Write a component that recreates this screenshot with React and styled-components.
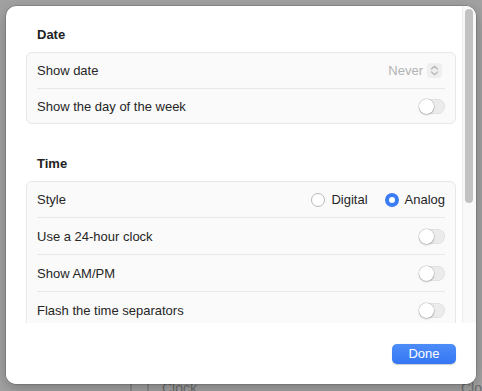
import React from 'react'
import styled, { createGlobalStyle } from 'styled-components'

const Global = createGlobalStyle`
  html, body { margin: 0; padding: 0; }
  *, *::before, *::after { box-sizing: border-box; }
  body {
    width: 482px;
    height: 391px;
    overflow: hidden;
    font-family: "Liberation Sans", Arial, sans-serif;
    -webkit-font-smoothing: antialiased;
  }
`

export default function App() {
  return (
    <>
      <Global />
      <Backdrop>
        <BackRow>
          <BackIcon />
          <BackLabel>Clock</BackLabel>
          <Spacer />
          <BackLabel>Clo</BackLabel>
        </BackRow>
        <Sheet>
          <Scroll>
            <Content>
              <Section>
                <Heading>Date</Heading>
                <Group>
                  <Row>
                    <Label>Show date</Label>
                    <Popup>
                      <PopupValue>Never</PopupValue>
                      <Stepper>
                        <svg width="9" height="11" viewBox="0 0 9 11">
                          <path d="M1.5 4 L4.5 1.2 L7.5 4" fill="none" stroke="#b9b9b9" strokeWidth="1.4" strokeLinecap="round" strokeLinejoin="round" />
                          <path d="M1.5 7 L4.5 9.8 L7.5 7" fill="none" stroke="#b9b9b9" strokeWidth="1.4" strokeLinecap="round" strokeLinejoin="round" />
                        </svg>
                      </Stepper>
                    </Popup>
                  </Row>
                  <Row $short>
                    <Label>Show the day of the week</Label>
                    <Toggle />
                  </Row>
                </Group>
              </Section>
              <Section>
                <Heading>Time</Heading>
                <Group>
                  <Row>
                    <Label>Style</Label>
                    <Radios>
                      <RadioItem>
                        <Radio />
                        Digital
                      </RadioItem>
                      <RadioItem>
                        <Radio $checked />
                        Analog
                      </RadioItem>
                    </Radios>
                  </Row>
                  <Row>
                    <Label>Use a 24-hour clock</Label>
                    <Toggle />
                  </Row>
                  <Row>
                    <Label>Show AM/PM</Label>
                    <Toggle />
                  </Row>
                  <Row>
                    <Label>Flash the time separators</Label>
                    <Toggle />
                  </Row>
                </Group>
              </Section>
            </Content>
            <Track>
              <Thumb />
            </Track>
          </Scroll>
          <Footer>
            <DoneButton>Done</DoneButton>
          </Footer>
        </Sheet>
      </Backdrop>
    </>
  )
}

const Backdrop = styled.div`
  position: relative;
  width: 482px;
  height: 391px;
  background: #a2a2a2;
  display: flex;
  flex-direction: column;
  justify-content: flex-end;
`

const BackRow = styled.div`
  display: flex;
  align-items: center;
  gap: 13px;
  height: 14px;
  padding-left: 130px;
  margin-bottom: -2px;
  overflow: hidden;
  color: #6e6e6e;
  font-size: 14px;
`

const BackIcon = styled.div`
  width: 19px;
  height: 19px;
  border: 2px solid #8a8a8a;
  border-radius: 5px;
  margin-top: 4px;
`

const BackLabel = styled.span`
  line-height: 14px;
  margin-top: 4px;
`

const Spacer = styled.div`
  flex: 1;
`

const Sheet = styled.div`
  position: absolute;
  left: 6px;
  top: 6px;
  width: 470px;
  height: 378px;
  background: #ffffff;
  border-radius: 10px;
  box-shadow: 0 0 0 0.5px rgba(0, 0, 0, 0.25), 0 4px 14px rgba(0, 0, 0, 0.25);
  display: flex;
  flex-direction: column;
  overflow: hidden;
`

const Scroll = styled.div`
  position: relative;
  height: 317px;
  overflow: hidden;
`

const Content = styled.div`
  padding: 21px 20px 0 20px;
  display: flex;
  flex-direction: column;
  gap: 32px;
`

const Section = styled.section`
  display: flex;
  flex-direction: column;
  gap: 9px;
`

const Heading = styled.h2`
  margin: 0 0 0 11px;
  font-size: 13px;
  line-height: 16px;
  font-weight: 700;
  color: #222222;
`

const Group = styled.div`
  background: #fafafa;
  border: 1px solid #e7e7e7;
  border-radius: 6px;
  padding: 0 10px;
`

const Row = styled.div`
  height: ${p => (p.$short ? '35px' : '37px')};
  display: flex;
  align-items: center;
  justify-content: space-between;
  border-top: 1px solid #e8e8e8;
  &:first-child {
    height: 35px;
    border-top: none;
  }
`

const Label = styled.span`
  font-size: 13px;
  color: #262626;
`

const Popup = styled.div`
  display: flex;
  align-items: center;
  gap: 4px;
  margin-right: 3px;
`

const PopupValue = styled.span`
  font-size: 13px;
  color: #b3b3b3;
`

const Stepper = styled.div`
  width: 15px;
  height: 15px;
  border-radius: 4px;
  background: #efefef;
  display: flex;
  align-items: center;
  justify-content: center;
`

const Toggle = styled.div`
  position: relative;
  width: 26px;
  height: 15px;
  border-radius: 8px;
  background: #ebebeb;
  box-shadow: inset 0 0 0 0.5px rgba(0, 0, 0, 0.08);
  &::after {
    content: '';
    position: absolute;
    left: 0;
    top: 0;
    width: 15px;
    height: 15px;
    border-radius: 50%;
    background: #ffffff;
    box-shadow: 0 0 0 0.5px rgba(0, 0, 0, 0.18), 0 1px 2px rgba(0, 0, 0, 0.2);
  }
`

const Radios = styled.div`
  display: flex;
  align-items: center;
  gap: 17px;
`

const RadioItem = styled.label`
  display: flex;
  align-items: center;
  gap: 6px;
  font-size: 13px;
  color: #262626;
`

const Radio = styled.span`
  width: 14px;
  height: 14px;
  border-radius: 50%;
  background: #ffffff;
  border: ${p => (p.$checked ? '4.5px solid #3a7cf6' : '1px solid #b9b9b9')};
`

const Track = styled.div`
  position: absolute;
  top: 0;
  right: 0;
  bottom: 0;
  width: 14px;
  background: #f9f9f9;
  border-left: 1px solid #ececec;
`

const Thumb = styled.div`
  margin: 3px 0 0 2px;
  width: 8px;
  height: 194px;
  border-radius: 4px;
  background: #c2c2c2;
`

const Footer = styled.div`
  flex: 1;
  display: flex;
  align-items: center;
  justify-content: flex-end;
  padding: 0 20px;
  background: #ffffff;
`

const DoneButton = styled.button`
  width: 64px;
  height: 20px;
  border: none;
  border-radius: 5px;
  background: linear-gradient(#4d8df8, #3476f5);
  box-shadow: 0 0.5px 1px rgba(0, 0, 0, 0.2);
  color: #ffffff;
  font-family: "Liberation Sans", Arial, sans-serif;
  font-size: 13px;
  font-weight: 500;
  padding: 0;
`
